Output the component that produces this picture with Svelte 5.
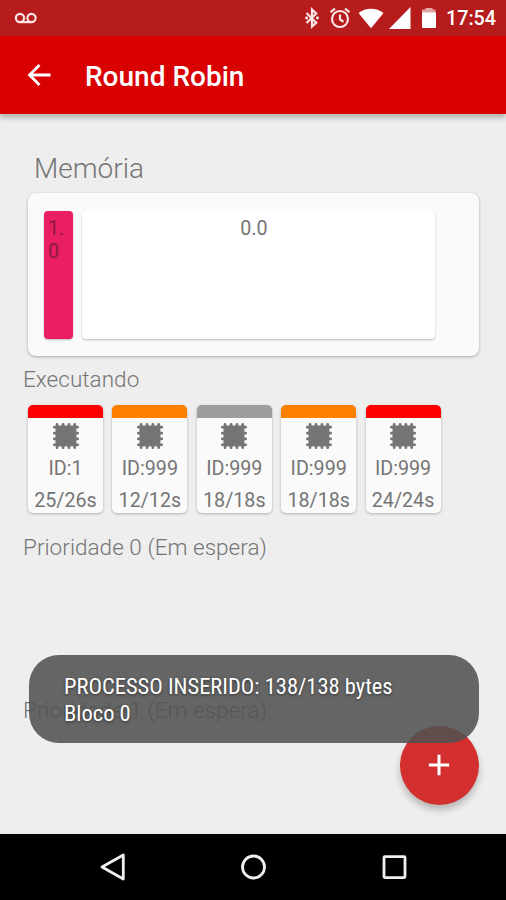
<script lang="ts">
  interface Process {
    id: number;
    done: number;
    total: number;
    priority: 'high' | 'medium' | 'low';
  }

  const running: Process[] = [
    { id: 1, done: 25, total: 26, priority: 'high' },
    { id: 999, done: 12, total: 12, priority: 'medium' },
    { id: 999, done: 18, total: 18, priority: 'low' },
    { id: 999, done: 18, total: 18, priority: 'medium' },
    { id: 999, done: 24, total: 24, priority: 'high' }
  ];

  const waitingQueues = [0, 1];

  // Pin offsets on each side of the chip
  const pins = [2.8, 8.8, 14.6, 20.4];

  let toast = $state(['PROCESSO INSERIDO: 138/138 bytes', 'Bloco 0']);
</script>

<div class="screen">
  <div class="status-bar">
    <svg class="voicemail" width="24" height="12" viewBox="0 0 24 12">
      <circle cx="6" cy="6" r="4.1" />
      <circle cx="17.5" cy="6" r="4.1" />
      <path d="M6 10.1h11.5" />
    </svg>
    <div class="status-icons">
      <svg width="16" height="22" viewBox="0 0 16 22">
        <path class="line" d="M2.5 6l9.7 9.6L8 19.5v-17l4.2 4L2.5 16" />
        <circle cx="2.6" cy="11" r="1.4" />
        <circle cx="13.4" cy="11" r="1.4" />
      </svg>
      <svg class="alarm" width="22" height="22" viewBox="0 0 22 22">
        <circle class="line" cx="11" cy="12" r="8" />
        <path class="line" d="M11 7.5V12.5l3.5 2.2M1.5 5.2L6 1.7M20.5 5.2L16 1.7" />
      </svg>
      <svg class="wifi" width="26" height="21" viewBox="0 0 26 21">
        <path d="M0.5 5C7.5-.7 18.5-.7 25.5 5L13 20.3z" />
      </svg>
      <svg class="signal" width="22" height="22" viewBox="0 0 22 22">
        <path d="M0 22L21.5 0v22z" />
      </svg>
      <svg class="battery" width="16" height="22" viewBox="0 0 16 22">
        <path class="dim" d="M4.5 1h7v1.5h3V6H1V2.5h3.5z" />
        <path d="M1 5.5h14V20a1 1 0 0 1-1 1H2a1 1 0 0 1-1-1z" />
      </svg>
      <span class="clock">17:54</span>
    </div>
  </div>

  <header class="app-bar">
    <button class="back" aria-label="Voltar">
      <svg width="24" height="24" viewBox="0 0 24 24">
        <path d="M23.5 12H2.5M12.5 2L2.5 12l10 10" />
      </svg>
    </button>
    <h1>Round Robin</h1>
  </header>

  <main>
    <h2>Memória</h2>
    <section class="memory">
      <div class="block used">1.<br />0</div>
      <div class="block free">0.0</div>
    </section>

    <h3>Executando</h3>
    <section class="running">
      {#each running as process}
        <div class="process {process.priority}">
          <svg width="26" height="26" viewBox="0 0 26 26">
            <rect x="2.6" y="2.6" width="20.8" height="20.8" />
            {#each pins as pin}
              <rect x={pin} y="0" width="2.6" height="26" rx="1.2" />
              <rect x="0" y={pin} width="26" height="2.6" rx="1.2" />
            {/each}
          </svg>
          <span class="id">ID:{process.id}</span>
          <span class="time">{process.done}/{process.total}s</span>
        </div>
      {/each}
    </section>

    {#each waitingQueues as queue}
      <section class="queue">
        <h3>Prioridade {queue} (Em espera)</h3>
      </section>
    {/each}
  </main>

  <nav>
    <svg width="26" height="28" viewBox="0 0 26 28">
      <path d="M24.3 2v24L3 14z" />
    </svg>
    <svg width="26" height="28" viewBox="0 0 26 28">
      <circle cx="13.5" cy="14" r="11" />
    </svg>
    <svg width="26" height="28" viewBox="0 0 26 28">
      <rect x="3" y="3.6" width="21" height="21" rx="1" />
    </svg>
  </nav>

  <button class="fab" aria-label="Adicionar">
    <svg width="22" height="22" viewBox="0 0 22 22">
      <path d="M11 0.8v20.4M0.8 11h20.4" />
    </svg>
  </button>

  <div class="toast">
    {#each toast as line}
      <span>{line}</span>
    {/each}
  </div>
</div>

<style>
  :global(body) {
    background: #eee;
  }

  .screen {
    position: relative;
    display: flex;
    flex-direction: column;
    width: 506px;
    height: 900px;
    overflow: hidden;
    background: #eee;
    color: #757575;
    font-family: Roboto, 'Liberation Sans', sans-serif;
  }

  h1,
  h2,
  h3 {
    margin: 0;
    white-space: nowrap;
  }

  button {
    display: flex;
    align-items: center;
    justify-content: center;
    padding: 0;
    border: none;
    background: none;
    cursor: pointer;
  }

  .status-bar {
    flex: none;
    display: flex;
    align-items: center;
    justify-content: space-between;
    height: 36px;
    padding: 0 10px 0 14px;
    box-sizing: border-box;
    background: #b71c1c;
    color: #fff;
  }

  .voicemail {
    fill: none;
    stroke: #fde3e3;
    stroke-width: 2.2;
  }

  .status-icons {
    display: flex;
    align-items: center;
    fill: #fff;
  }

  .line {
    fill: none;
    stroke: #fbe5e5;
    stroke-width: 2.2;
  }

  .alarm {
    margin-left: 9px;
  }

  .wifi {
    margin-left: 7px;
  }

  .signal {
    margin-left: 5px;
  }

  .battery {
    margin-left: 10px;
  }

  .dim {
    fill: #e2a4a4;
  }

  .clock {
    margin-left: 9px;
    padding-top: 2px;
    font-size: 19.7px;
    font-weight: 500;
    line-height: 24px;
  }

  .app-bar {
    flex: none;
    display: flex;
    align-items: center;
    height: 78px;
    padding-left: 27px;
    box-sizing: border-box;
    background: #d80000;
    color: #fff;
    box-shadow: 0 4px 5px rgba(0, 0, 0, 0.24);
  }

  .back svg {
    fill: none;
    stroke: #fff;
    stroke-width: 2.8;
  }

  .app-bar h1 {
    margin-left: 34px;
    padding-top: 3px;
    font-size: 28px;
    font-weight: 500;
    line-height: 34px;
  }

  main {
    flex: 1;
    min-height: 0;
    padding: 38px 27px 0 28px;
  }

  h2 {
    padding-left: 6px;
    font-size: 28px;
    font-weight: 300;
    line-height: 34px;
  }

  h3 {
    margin-left: -5px;
    font-size: 22.5px;
    font-weight: 300;
    line-height: 26px;
    letter-spacing: 0.04px;
  }

  .memory {
    display: flex;
    gap: 9px;
    height: 163px;
    margin: 7px 0 10px;
    padding: 18px 44px 17px 16px;
    box-sizing: border-box;
    border-radius: 8px;
    background: #fafafa;
    box-shadow: 0 1px 3px rgba(0, 0, 0, 0.3);
  }

  .block {
    padding-top: 6px;
    border-radius: 4px;
    box-sizing: border-box;
    font-size: 19.7px;
    line-height: 23px;
    box-shadow: 0 1px 2px rgba(0, 0, 0, 0.26);
  }

  .used {
    width: 29px;
    padding-left: 4px;
    background: #e91e63;
    color: #8c1a40;
  }

  .free {
    flex: 1;
    padding-right: 9px;
    background: #fff;
    text-align: center;
  }

  .running {
    display: flex;
    gap: 9.4px;
    margin: 13px 0 21px;
  }

  .process {
    display: flex;
    flex-direction: column;
    align-items: center;
    width: 75px;
    height: 108px;
    padding-top: 5px;
    box-sizing: border-box;
    border-top: 13px solid #9e9e9e;
    border-radius: 5px;
    background: #fafafa;
    font-size: 19.7px;
    line-height: 23px;
    box-shadow: 0 1px 3px rgba(0, 0, 0, 0.26);
  }

  .process.high {
    border-top-color: #f00;
  }

  .process.medium {
    border-top-color: #ff8000;
  }

  .process svg {
    fill: #757575;
  }

  .id {
    margin-top: 8px;
  }

  .time {
    margin-top: 9px;
  }

  .queue {
    height: 162.5px;
  }

  nav {
    flex: none;
    display: flex;
    align-items: center;
    justify-content: center;
    gap: 115px;
    height: 66.5px;
    background: #000;
    fill: none;
    stroke: #f0f0f0;
    stroke-width: 2.8;
    stroke-linejoin: round;
  }

  /* Floating layers above the page */
  .fab {
    position: absolute;
    right: 27px;
    bottom: 95.5px;
    width: 79px;
    height: 79px;
    border-radius: 50%;
    background: #d32f2f;
    box-shadow: 0 5px 7px rgba(0, 0, 0, 0.24);
  }

  .fab svg {
    margin-right: 1px;
    stroke: #fff;
    stroke-width: 3;
  }

  .toast {
    position: absolute;
    left: 28.5px;
    right: 27px;
    bottom: 157.5px;
    display: flex;
    flex-direction: column;
    height: 87.5px;
    padding: 18px 35.5px 0;
    box-sizing: border-box;
    border-radius: 30px;
    background: rgba(82, 82, 82, 0.88);
    color: #fff;
    font-family: 'Roboto Condensed', Roboto, sans-serif;
    font-size: 22.5px;
    font-stretch: 75%;
    line-height: 27px;
    text-shadow: 0 1px 3px rgba(0, 0, 0, 0.5);
    white-space: nowrap;
  }
</style>
